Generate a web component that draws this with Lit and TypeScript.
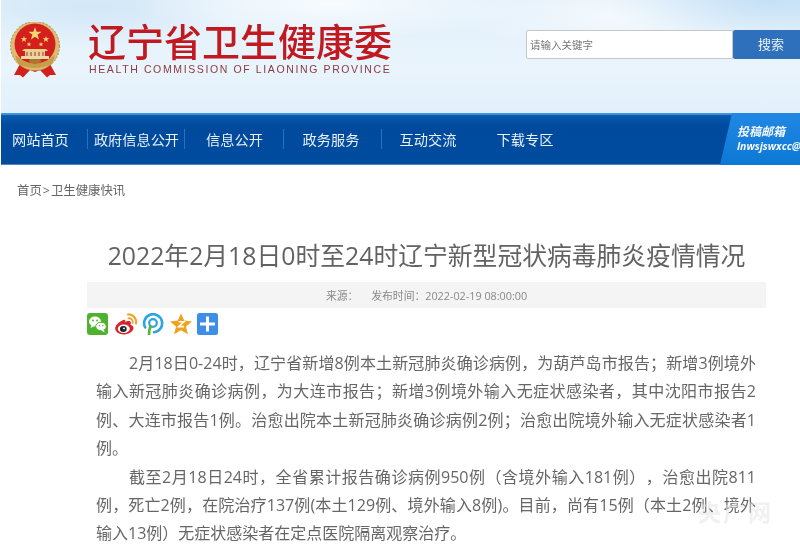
import { LitElement, html, css, svg } from "lit";
import { customElement } from "lit/decorators.js";

const emblem = svg`<svg class="emblem" viewBox="0 0 50 56" width="50" height="56" aria-hidden="true">
  <path d="M10 42 L4 53 L10 53 L13 55.5 L20 48 L25 50 L30 48 L37 55.5 L40 53 L46 53 L40 42Z" fill="#d2201b"/>
  <circle cx="25" cy="24" r="24.5" fill="#dcbc74"/>
  <circle cx="25" cy="24" r="24.5" fill="none" stroke="#b08a3e" stroke-width="1" stroke-dasharray="2 1.6"/>
  <circle cx="25" cy="22" r="20.5" fill="#d3201c"/>
  <path d="M5 33 Q25 50 45 33 L42 42 Q25 50 8 42Z" fill="#c99c46"/>
  <polygon points="25,5 26.6,9.8 31.6,9.8 27.6,12.8 29.1,17.6 25,14.7 20.9,17.6 22.4,12.8 18.4,9.8 23.4,9.8" fill="#f6d774"/>
  <polygon points="14,14 14.8,16.3 17.2,16.3 15.3,17.7 16,20 14,18.6 12,20 12.7,17.7 10.8,16.3 13.2,16.3" fill="#f6d774"/>
  <polygon points="36,14 36.8,16.3 39.2,16.3 37.3,17.7 38,20 36,18.6 34,20 34.7,17.7 32.8,16.3 35.2,16.3" fill="#f6d774"/>
  <polygon points="19,20 19.6,21.6 21.3,21.6 20,22.7 20.5,24.3 19,23.3 17.5,24.3 18,22.7 16.7,21.6 18.4,21.6" fill="#f6d774"/>
  <polygon points="31,20 31.6,21.6 33.3,21.6 32,22.7 32.5,24.3 31,23.3 29.5,24.3 30,22.7 28.7,21.6 30.4,21.6" fill="#f6d774"/>
  <path d="M14 27 H36 L38 29 H12Z" fill="#ecd189"/>
  <rect x="15" y="29" width="20" height="5" fill="#e7cf97"/>
  <path d="M17 30 V34 M21 30 V34 M25 30 V34 M29 30 V34 M33 30 V34" stroke="#9e3a2a" stroke-width="1"/>
  <rect x="11" y="34" width="28" height="3" fill="#ecd9a8"/>
  <rect x="19" y="37" width="12" height="4" rx="2" fill="#a9782e"/>
</svg>`;

const icons = [
  svg`<svg viewBox="0 0 22 22" width="22" height="22" aria-hidden="true">
    <rect width="21" height="22" rx="3" fill="#4fb22c"/>
    <ellipse cx="8" cy="8.5" rx="6" ry="5" fill="#fff"/>
    <path d="M4.5 12 L3.5 15 L7.5 13Z" fill="#fff"/>
    <ellipse cx="14" cy="13.5" rx="5.3" ry="4.3" fill="#fff" stroke="#4fb22c" stroke-width="1"/>
    <path d="M16.5 17 L18 19.5 L14 17.5Z" fill="#fff"/>
    <circle cx="6" cy="7.5" r="0.9" fill="#4fb22c"/><circle cx="10" cy="7.5" r="0.9" fill="#4fb22c"/>
    <circle cx="12.3" cy="12.8" r="0.7" fill="#4fb22c"/><circle cx="15.8" cy="12.8" r="0.7" fill="#4fb22c"/>
  </svg>`,
  svg`<svg viewBox="0 0 22 22" width="22" height="22" aria-hidden="true">
    <path d="M9 6.8 C4 8.5 0 12.5 0.2 15.8 C0.6 19.6 5 21.8 9.8 21.4 C15.4 20.9 19 17.6 18.4 14.3 C18 12.4 16.2 12 15.5 11.7 C16.3 9.8 15.8 8.5 14.6 8.1 C13.2 7.6 11.4 8.2 10.2 9 C10.6 7.6 10.2 6.4 9 6.8Z" fill="#d9232b"/>
    <ellipse cx="8.8" cy="15.8" rx="6" ry="4.3" fill="#fff"/>
    <ellipse cx="8.3" cy="16" rx="3.4" ry="2.9" fill="#222"/>
    <circle cx="9" cy="15.4" r="0.9" fill="#fff"/>
    <path d="M13 1.5 C17.5 0.8 21.8 5 21 10.5" fill="none" stroke="#f2a02f" stroke-width="2.2" stroke-linecap="round"/>
    <path d="M13.5 5.3 C16.2 4.8 18.4 7.5 17.7 10" fill="none" stroke="#f2a02f" stroke-width="1.8" stroke-linecap="round"/>
  </svg>`,
  svg`<svg viewBox="0 0 22 22" width="22" height="22" aria-hidden="true">
    <path d="M3.2 14.5 A9 9 0 1 1 12 19.2" fill="none" stroke="#2ba4e0" stroke-width="2.6" stroke-linecap="round"/>
    <circle cx="11" cy="10" r="3.8" fill="none" stroke="#2ba4e0" stroke-width="2.2"/>
    <path d="M7 22 C7 18 7.5 15 9 12.5" fill="none" stroke="#5cb531" stroke-width="2.6"/>
  </svg>`,
  svg`<svg viewBox="0 0 22 22" width="22" height="22" aria-hidden="true">
    <polygon points="11,0.5 14.2,7.6 22,8.4 16,13.5 17.9,21.3 11,17.2 4.1,21.3 6,13.5 0,8.4 7.8,7.6" fill="#f0a21c"/>
    <path d="M8.6 8.8 H13.8 L8.6 13.6 H14" fill="none" stroke="#fff" stroke-width="1.6"/>
  </svg>`,
  svg`<svg viewBox="0 0 22 22" width="22" height="22" aria-hidden="true">
    <rect width="21" height="22" rx="2.5" fill="#3d8ee6"/>
    <path d="M10.5 3.5 V18.5 M3 11 H18" stroke="#fff" stroke-width="3"/>
  </svg>`,
];

const navItems: [string, string][] = [
  ["网站首页", "first sep"],
  ["政府信息公开", "wide sep"],
  ["信息公开", "info sep"],
  ["政务服务", "serv sep"],
  ["互动交流", "talk"],
  ["下载专区", "down"],
];

@customElement("app-root")
export class AppRoot extends LitElement {
  static styles = css`
    :host {
      display: block;
      height: 549px;
      overflow: hidden;
      position: relative;
      background: #fff;
      padding-left: 1px;
      box-sizing: border-box;
      font-family: "Open Sans", "Noto Sans CJK SC", sans-serif;
      color: #666;
      filter: blur(0.45px);
    }
    .top {
      height: 113px;
      box-sizing: border-box;
      display: flex;
      align-items: flex-start;
      background:
        radial-gradient(ellipse 170px 45px at 770px 0px, #c4e0f6 0%, rgba(196, 224, 246, 0) 100%),
        radial-gradient(ellipse 200px 34px at 330px 4px, #f7fbfe 0%, rgba(247, 251, 254, 0) 100%),
        radial-gradient(ellipse 180px 40px at 640px 14px, #f6fafd 0%, rgba(246, 250, 253, 0) 100%),
        radial-gradient(ellipse 160px 40px at 90px 6px, #d2e7f7 0%, rgba(210, 231, 247, 0) 100%),
        linear-gradient(#e3f0fa, #e9f4fc 60%, #e3f0fb);
    }
    .emblem { margin: 22px 0 0 9px; flex: none; }
    .brand { margin: 19px 0 0 28px; flex: none; width: 304px; }
    .brand-cn {
      font-size: 38px;
      line-height: 44px;
      color: #c1191f;
      white-space: nowrap;
      font-weight: 500;
    }
    .brand-en {
      font-family: "Liberation Sans", sans-serif;
      font-size: 10.5px;
      line-height: 14px;
      margin: -1px 0 0 1px;
      letter-spacing: 1.62px;
      color: #8c3a3e;
      white-space: nowrap;
    }
    .search { margin: 30px 0 0 auto; display: flex; height: 29px; }
    .search-input {
      width: 207px;
      box-sizing: border-box;
      background: #fff;
      border: 1px solid #c4c8cc;
      border-radius: 2px 0 0 2px;
      padding-left: 3px;
      font-size: 10.5px;
      line-height: 28px;
      color: #777;
    }
    .search-btn {
      width: 67px;
      background: #2f70bd;
      border-radius: 2px 0 0 2px;
      color: #e8f0f8;
      font-size: 13px;
      line-height: 29px;
      text-align: center;
      padding-left: 9px;
      box-sizing: border-box;
    }
    nav {
      height: 52px;
      box-sizing: border-box;
      border-top: 2px solid #3f92e2;
      border-bottom: 1px solid #4d86c4;
      background: linear-gradient(#0a5aad, #004a9d 22%, #024c9f);
      display: flex;
      color: #eaf1f8;
      font-size: 14.2px;
    }
    .item {
      line-height: 49px;
      white-space: nowrap;
      text-align: center;
      position: relative;
      box-sizing: border-box;
    }
    .item.first { width: 87px; text-align: left; padding-left: 11px; }
    .item.wide { width: 97px; }
    .item.info { width: 99px; }
    .item.serv { width: 98px; padding-right: 4px; }
    .item.talk { width: 92px; }
    .item.down { width: 102px; }
    .item.sep::after {
      content: "";
      position: absolute;
      right: 0;
      top: 14px;
      height: 20px;
      width: 1px;
      background: #2a6fc0;
    }
    .mail {
      margin-left: auto;
      width: 80px;
      margin-top: -2px;
      margin-bottom: -1px;
      box-sizing: border-box;
      background: linear-gradient(#2187e3, #0d79d5);
      clip-path: polygon(12px 0, 100% 0, 100% 100%, 0 100%);
      padding: 12px 0 0 17px;
      overflow: hidden;
      color: #f2f8fd;
      font-style: italic;
      font-weight: 700;
      white-space: nowrap;
    }
    .mail-title { font-size: 12px; line-height: 14px; }
    .mail-addr { font-size: 10.5px; line-height: 14px; }
    .crumb {
      margin: 17px 0 0 16px;
      font-size: 12.4px;
      line-height: 18px;
      color: #666;
    }
    .crumb i { font-style: normal; margin: 0 1px; }
    article { margin: 0 34px 0 86px; }
    h1 {
      margin: 38px 0 0;
      font-size: 24.8px;
      line-height: 34px;
      font-weight: 400;
      color: #626262;
      text-align: center;
      white-space: nowrap;
    }
    .meta {
      margin-top: 10px;
      height: 26px;
      background: #f4f4f4;
      font-size: 10.8px;
      line-height: 28px;
      color: #888;
      text-align: center;
    }
    .meta span + span { margin-left: 13px; }
    .share { display: flex; gap: 5.5px; margin-top: 5px; height: 22px; }
    .body {
      margin: 14px 0 0 9px;
      width: 660px;
      font-size: 16px;
      line-height: 28.4px;
      color: #666;
      text-align: justify;
      text-spacing-trim: space-all;
    }
    .body p { margin: 0; text-indent: 33px; }
    .mark {
      position: absolute;
      right: 27px;
      bottom: 24px;
      font-size: 23px;
      line-height: 26px;
      letter-spacing: 2px;
      font-weight: 700;
      color: rgba(228, 228, 228, 0.5);
    }
  `;

  render() {
    return html`
      <header class="top">
        ${emblem}
        <div class="brand">
          <div class="brand-cn">辽宁省卫生健康委</div>
          <div class="brand-en">HEALTH COMMISSION OF LIAONING PROVINCE</div>
        </div>
        <div class="search">
          <div class="search-input">请输入关键字</div>
          <div class="search-btn">搜索</div>
        </div>
      </header>
      <nav>
        ${navItems.map(([t, c]) => html`<div class="item ${c}">${t}</div>`)}
        <div class="mail">
          <div class="mail-title">投稿邮箱</div>
          <div class="mail-addr">lnwsjswxcc@163.com</div>
        </div>
      </nav>
      <div class="crumb">首页<i>&gt;</i>卫生健康快讯</div>
      <article>
        <h1>2022年2月18日0时至24时辽宁新型冠状病毒肺炎疫情情况</h1>
        <div class="meta"><span>来源：</span><span>发布时间：2022-02-19 08:00:00</span></div>
        <div class="share">${icons}</div>
        <div class="body">
          <p>2月18日0-24时，辽宁省新增8例本土新冠肺炎确诊病例，为葫芦岛市报告；新增3例境外输入新冠肺炎确诊病例，为大连市报告；新增3例境外输入无症状感染者，其中沈阳市报告2例、大连市报告1例。治愈出院本土新冠肺炎确诊病例2例；治愈出院境外输入无症状感染者1例。</p>
          <p>截至2月18日24时，全省累计报告确诊病例950例（含境外输入181例），治愈出院811例，死亡2例，在院治疗137例(本土129例、境外输入8例)。目前，尚有15例（本土2例、境外输入13例）无症状感染者在定点医院隔离观察治疗。</p>
        </div>
      </article>
      <div class="mark">央广网</div>
    `;
  }
}
